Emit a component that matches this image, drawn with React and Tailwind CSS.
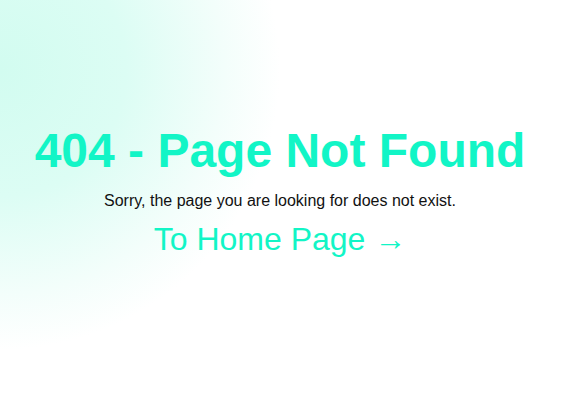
export default function App() {
  return (
    <div
      className="w-[574px] h-[412px] overflow-hidden bg-white bg-[radial-gradient(circle_280px_at_0px_70px,#d2fcf0_0%,#dcfdf4_45%,#f3fefb_80%,#ffffff_100%)]"
      style={{ fontFamily: '"Liberation Sans", Arial, sans-serif' }}
    >
      <div className="w-[560px] pt-[123px] flex flex-col items-center text-center">
        <h1 className="text-[48px] leading-[55px] font-bold text-[#12f5c6]">404 - Page Not Found</h1>
        <p className="mt-[14px] text-[16px] leading-[18px] text-[#111]">Sorry, the page you are looking for does not exist.</p>
        <a href="#" className="mt-[11px] text-[32px] leading-[37px] text-[#12f5c6]">To Home Page →</a>
      </div>
    </div>
  );
}
